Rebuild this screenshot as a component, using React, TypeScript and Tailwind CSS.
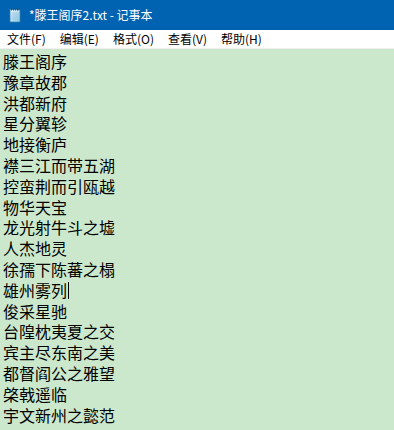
import React from "react";

const lines = [
  "滕王阁序",
  "豫章故郡",
  "洪都新府",
  "星分翼轸",
  "地接衡庐",
  "襟三江而带五湖",
  "控蛮荆而引瓯越",
  "物华天宝",
  "龙光射牛斗之墟",
  "人杰地灵",
  "徐孺下陈蕃之榻",
  "雄州雾列",
  "俊采星驰",
  "台隍枕夷夏之交",
  "宾主尽东南之美",
  "都督阎公之雅望",
  "棨戟遥临",
  "宇文新州之懿范",
];

const menus = ["文件(F)", "编辑(E)", "格式(O)", "查看(V)", "帮助(H)"];

function NotepadIcon() {
  return (
    <svg width="16" height="16" viewBox="0 0 16 16" className="shrink-0">
      <defs>
        <linearGradient id="pg" x1="0" y1="0" x2="1" y2="1">
          <stop offset="0" stopColor="#e8f6fd" />
          <stop offset="1" stopColor="#8ccbe8" />
        </linearGradient>
      </defs>
      <path d="M3 2.5h10v12.5H3z" fill="url(#pg)" stroke="#3d7fa8" strokeWidth="0.8" />
      <path d="M4.5 1v2.5M6.5 1v2.5M8.5 1v2.5M10.5 1v2.5M12 1v2.5" stroke="#2a4b63" strokeWidth="0.9" />
      <path d="M4.5 6h7M4.5 8h7M4.5 10h7M4.5 12h7" stroke="#7fb3d3" strokeWidth="0.6" />
    </svg>
  );
}

export default function App() {
  return (
    <div className="w-[394px] h-[430px] overflow-hidden flex flex-col" style={{ fontFamily: '"Noto Sans CJK SC", sans-serif' }}>
      {/* Title bar */}
      <div className="h-[30px] bg-[#0063b1] flex items-center pl-[7px] gap-[6px] shrink-0">
        <NotepadIcon />
        <span className="text-white text-[12px] leading-none">*滕王阁序2.txt - 记事本</span>
      </div>

      {/* Menu bar */}
      <div className="h-[19px] bg-white flex items-center border-b border-[#f0f0f0] shrink-0">
        {menus.map((m) => (
          <span key={m} className="px-[7px] text-[12px] leading-none text-black">
            {m}
          </span>
        ))}
      </div>

      {/* Editor */}
      <div className="flex-1 bg-[#cce8cc] pl-[3px] pt-[2px]">
        {lines.map((l, i) => (
          <div key={i} className="text-[16px] leading-[20.8px] text-black whitespace-nowrap flex items-center">
            <span>{l}</span>
            {i === 11 && <span className="inline-block w-px h-[17px] bg-black ml-[1px]" />}
          </div>
        ))}
      </div>
    </div>
  );
}
